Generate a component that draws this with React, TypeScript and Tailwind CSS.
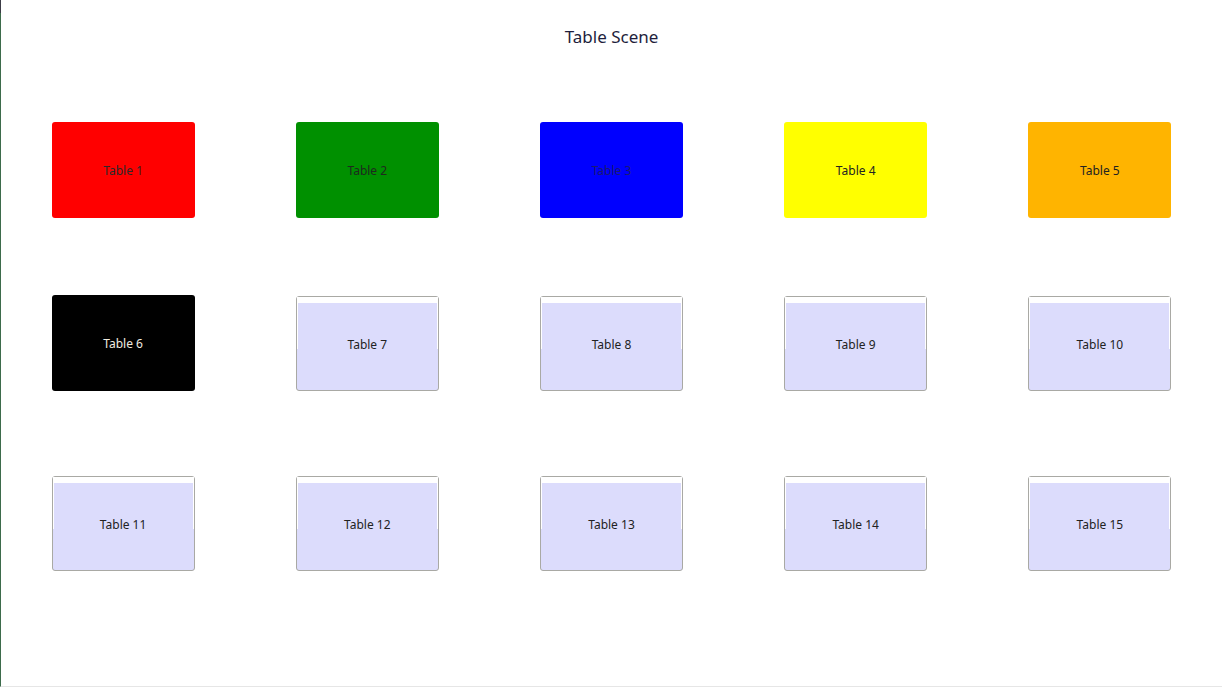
const tables = [
  { label: 'Table 1', color: 'bg-[#ff0000]', text: 'text-[#2a2a2a]' },
  { label: 'Table 2', color: 'bg-[#009000]', text: 'text-[#1e2a1e]' },
  { label: 'Table 3', color: 'bg-[#0000ff]', text: 'text-[#1a1a70]' },
  { label: 'Table 4', color: 'bg-[#ffff00]', text: 'text-[#222]' },
  { label: 'Table 5', color: 'bg-[#ffb400]', text: 'text-[#222]' },
  { label: 'Table 6', color: 'bg-black', text: 'text-[#f0ece0]' }
]

const plainTables = Array.from({ length: 9 }, (_, i) => `Table ${i + 7}`)

const ColorTable = ({ label, color, text }: { label: string; color: string; text: string }) => (
  <div className={`w-[143px] h-[96px] pt-[2px] rounded-[3px] flex items-center justify-center text-[12px] ${color} ${text}`}>
    {label}
  </div>
)

const PlainTable = ({ label }: { label: string }) => (
  <div className="w-[143px] h-[95px] mt-px rounded-[3px] border border-[#a9a9a4] bg-[#dcdcfc] relative flex flex-col">
    <span className="absolute left-0 right-0 top-0 h-[52px] border-t-[6px] border-x border-white" />
    <div className="flex-1 pt-[2px] flex items-center justify-center text-[12px] text-[#222] relative">{label}</div>
  </div>
)

export default function App() {
  const rows = [tables.slice(0, 5), [tables[5]]]
  return (
    <div
      className="w-[1222px] h-[687px] bg-white border-l border-[#3d6b4b] border-b border-b-[#e6e6e6] flex flex-col relative"
      style={{ fontFamily: '"Segoe UI", "Noto Sans", "Open Sans", sans-serif' }}
    >
      <span className="absolute -left-px top-0 w-px h-[13px] bg-[#3c3c46]" />
      <div className="pt-[25px] h-[49px] text-center text-[17px] leading-[24px] text-[#1e1e3c]">Table Scene</div>

      <div className="grid grid-cols-5 mt-[73px]">
        {rows[0].map((t) => (
          <div key={t.label} className="flex justify-center">
            <ColorTable {...t} />
          </div>
        ))}
      </div>

      <div className="grid grid-cols-5 mt-[77px]">
        <div className="flex justify-center">
          <ColorTable {...rows[1][0]} />
        </div>
        {plainTables.slice(0, 4).map((t) => (
          <div key={t} className="flex justify-center">
            <PlainTable label={t} />
          </div>
        ))}
      </div>

      <div className="grid grid-cols-5 mt-[84px]">
        {plainTables.slice(4).map((t) => (
          <div key={t} className="flex justify-center">
            <PlainTable label={t} />
          </div>
        ))}
      </div>
    </div>
  )
}
